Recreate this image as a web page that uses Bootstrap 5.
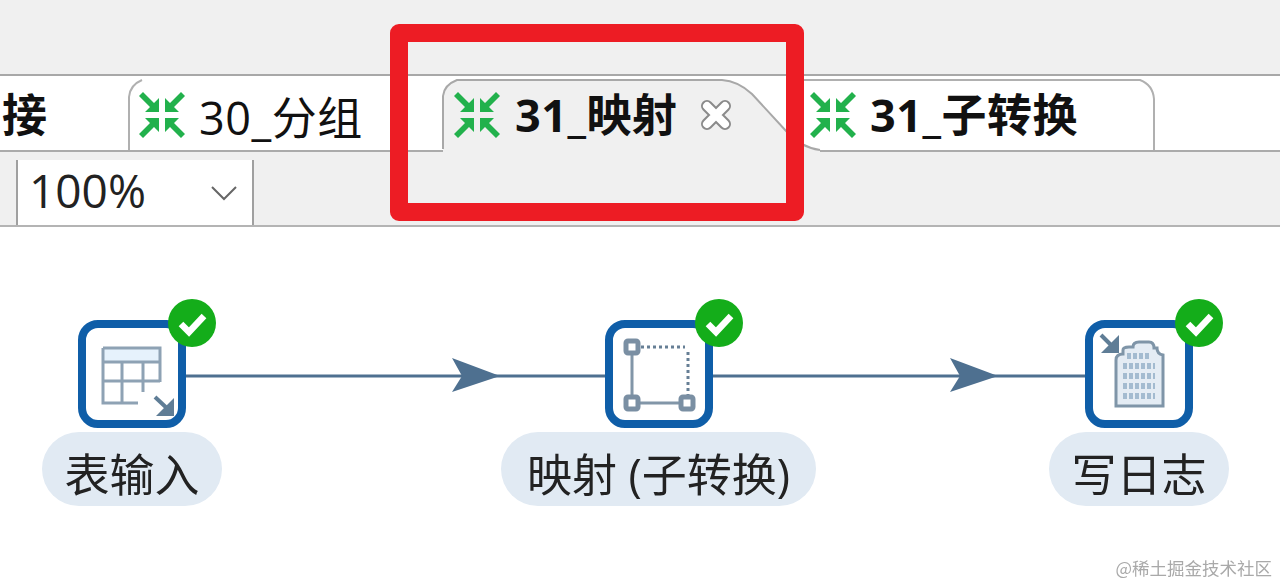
<!DOCTYPE html>
<html lang="en">

<head>
    <meta charset="utf-8" />
    <meta name="viewport" content="width=device-width, initial-scale=1" />
    <title>映射 (子转换)</title>

    <link rel="stylesheet" href="https://cdn.jsdelivr.net/npm/bootstrap@5.3.2/dist/css/bootstrap.min.css">
    <style>
        html, body {
            height: 584px;
            overflow: hidden;
        }

        body {
            background-color: #fff;
            font-family: "Open Sans", "Noto Sans CJK SC", sans-serif;
            color: #111;
            filter: blur(0.7px);
        }

        .top-gap {
            height: 76px;
            background-color: #f0f0f0;
            border-bottom: 2px solid #a8a8a8;
        }

        .tab-strip {
            height: 76px;
            padding-top: 4px;
            background-color: #fff;
            border-bottom: 2px solid #ababab;
        }

        .tab-item {
            height: 70px;
            font-size: 45px;
            letter-spacing: 0.5px;
            line-height: 70px;
            white-space: nowrap;
        }

        .tab-shape {
            top: -1px;
            left: 0;
        }

        .tab-inner {
            height: 70px;
        }

        #tab-first { width: 128px; font-weight: 700; }
        #tab-first .tab-inner { padding-left: 2px; }
        #tab-group { width: 314px; }
        #tab-group .tab-inner { padding-left: 10px; }
        #tab-group .tab-text { padding-top: 6px; }
        #tab-map { width: 358px; font-weight: 700; }
        #tab-map .tab-inner { padding-left: 11px; }
        #tab-sub { width: 355px; font-weight: 700; }
        #tab-sub .tab-inner { padding-left: 9px; }

        .tab-icon { margin-right: 13px; flex: none; }
        #tab-map .tab-icon { margin-right: 14px; }

        .tab-close { margin-left: 22px; flex: none; }

        .tool-row {
            height: 75px;
            padding-top: 8px;
            background-color: #f0f0f0;
            border-bottom: 2px solid #b4b4b4;
        }

        .zoom-box {
            width: 238px;
            margin-left: 16px;
            padding-left: 11px;
            padding-right: 14px;
            background-color: #fff;
            border-left: 2px solid #a0a0a0;
            border-right: 2px solid #a0a0a0;
            font-size: 46px;
            line-height: 60px;
            color: #222;
        }

        .zoom-value { margin-top: -5px; }

        .flow-canvas {
            height: 357px;
        }

        .flow-links {
            top: 0;
            left: 0;
        }

        .flow-node {
            top: 93px;
        }

        #node-input { left: 42px; width: 180px; }
        #node-map { left: 501px; width: 315px; }
        #node-log { left: 1049px; width: 180px; }

        .node-box {
            width: 108px;
            height: 108px;
            background-color: #fff;
            border: 8px solid #0f5ea8;
            border-radius: 20px;
        }

        .node-check {
            top: -29px;
            right: -38px;
        }

        .node-label {
            height: 74px;
            margin-top: 4px;
            background-color: #e1eaf3;
            border-radius: 37px;
            font-size: 45px;
            line-height: 86px;
            color: #222;
            white-space: nowrap;
        }

        .red-frame {
            top: 24px;
            left: 390px;
            width: 414px;
            height: 197px;
            border: 18px solid #ed1c24;
            border-radius: 9px;
        }

        .site-mark {
            right: 8px;
            bottom: 3px;
            font-family: "Noto Sans CJK SC", sans-serif;
            font-size: 17.5px;
            color: #a9a9a9;
        }
    </style>
</head>

<body>
    <svg width="0" height="0" class="position-absolute">
        <defs>
            <g id="arrows-in" fill="#22b14c">
                <path d="M21 21H7l5-5L1 5l4-4 11 11 5-5z" />
                <path d="M27 21h14l-5-5L47 5l-4-4-11 11-5-5z" />
                <path d="M21 27H7l5 5L1 43l4 4 11-11 5 5z" />
                <path d="M27 27h14l-5 5 11 11-4 4-11-11-5 5z" />
            </g>
            <g id="ok-badge">
                <circle cx="24" cy="24" r="24" fill="#14ad1a" />
                <path d="M13 25l8 8 15-16" fill="none" stroke="#fff" stroke-width="6.5" />
            </g>
        </defs>
    </svg>

    <div class="top-gap"></div>

    <ul class="nav flex-nowrap tab-strip">
        <li class="tab-item" id="tab-first">
            <div class="tab-inner d-flex align-items-center">接</div>
        </li>
        <li class="tab-item position-relative" id="tab-group">
            <svg class="tab-shape position-absolute" width="314" height="72">
                <path d="M1 71V18Q2 6 14 1" fill="none" stroke="#b0b0b0" stroke-width="2" />
            </svg>
            <div class="tab-inner d-flex align-items-center position-relative">
                <svg class="tab-icon" width="48" height="48"><use href="#arrows-in" /></svg><span class="tab-text">30_分组</span>
            </div>
        </li>
        <li class="tab-item position-relative" id="tab-map">
            <svg class="tab-shape position-absolute" width="385" height="74">
                <path d="M1 72V17Q2 6 15 1H280Q296 2 310 15L345 53Q358 68 378 71V74H1z" fill="#f0f0f0" />
                <path d="M1 70V17Q2 6 15 1H280Q296 2 310 15L345 53Q358 68 378 71" fill="none" stroke="#a8a8a8" stroke-width="2" />
            </svg>
            <div class="tab-inner d-flex align-items-center position-relative">
                <svg class="tab-icon" width="48" height="48"><use href="#arrows-in" /></svg><span class="tab-text">31_映射</span>
                <svg class="tab-close" width="34" height="32" viewBox="0 0 34 32">
                    <path d="M8 7L26 25M26 7L8 25" stroke="#8a8a8a" stroke-width="12" stroke-linecap="round" />
                    <path d="M8 7L26 25M26 7L8 25" stroke="#fff" stroke-width="8" stroke-linecap="round" />
                </svg>
            </div>
        </li>
        <li class="tab-item position-relative" id="tab-sub">
            <svg class="tab-shape position-absolute" width="355" height="72">
                <path d="M0 1H340Q353 6 354 20V71" fill="none" stroke="#b0b0b0" stroke-width="2" />
            </svg>
            <div class="tab-inner d-flex align-items-center position-relative">
                <svg class="tab-icon" width="48" height="48"><use href="#arrows-in" /></svg><span class="tab-text">31_子转换</span>
            </div>
        </li>
    </ul>

    <div class="tool-row d-flex">
        <div class="zoom-box d-flex align-items-center justify-content-between">
            <span class="zoom-value">100%</span>
            <svg width="28" height="16" viewBox="0 0 28 16">
                <path d="M2 2l12 12L26 2" fill="none" stroke="#666" stroke-width="2" />
            </svg>
        </div>
    </div>

    <div class="flow-canvas position-relative">
        <svg class="flow-links position-absolute" width="1280" height="357">
            <path d="M186 149H606M712 149H1086" stroke="#4e7090" stroke-width="3" />
            <path d="M452 131L500 149L452 165L462 149z" fill="#4e7090" />
            <path d="M950 131L998 149L950 165L960 149z" fill="#4e7090" />
        </svg>

        <div class="flow-node position-absolute d-flex flex-column align-items-center" id="node-input">
            <div class="node-box position-relative">
                <svg width="92" height="92">
                    <rect x="18" y="21" width="56" height="13" fill="#e6f2fc" />
                    <path d="M17 20H74V54M17 20V75H52M17 34H74M17 53H74M36 34V75M57 34V64" fill="none" stroke="#8ea2b4" stroke-width="3" />
                    <path d="M69 69L85 84" stroke="#5f7d96" stroke-width="4" />
                    <path d="M88 70V88H70z" fill="#5f7d96" />
                </svg>
                <svg class="node-check position-absolute" width="48" height="48"><use href="#ok-badge" /></svg>
            </div>
            <div class="node-label w-100 text-center">表输入</div>
        </div>

        <div class="flow-node position-absolute d-flex flex-column align-items-center" id="node-map">
            <div class="node-box position-relative">
                <svg width="92" height="92">
                    <path d="M19 26V68M26 75H68" stroke="#8296a8" stroke-width="3" />
                    <path d="M28 19H72M75 24V68" stroke="#667f95" stroke-width="3" stroke-dasharray="3 3" />
                    <g fill="#fff" stroke="#7a8fa3" stroke-width="5">
                        <rect x="13" y="13" width="12" height="12" rx="2" />
                        <rect x="13" y="69" width="12" height="12" rx="2" />
                        <rect x="68" y="69" width="12" height="12" rx="2" />
                    </g>
                </svg>
                <svg class="node-check position-absolute" width="48" height="48"><use href="#ok-badge" /></svg>
            </div>
            <div class="node-label w-100 text-center">映射 (子转换)</div>
        </div>

        <div class="flow-node position-absolute d-flex flex-column align-items-center" id="node-log">
            <div class="node-box position-relative">
                <svg width="92" height="92">
                    <path d="M23 32Q23 26 30 26V22Q30 19 36 19H40Q40 14 46 14H56Q61 14 61 20H64Q64 26 70 27V78H23z" fill="#e4ecf4" stroke="#7f95a8" stroke-width="3" />
                    <path d="M34 28H58M30 38H62M30 48H62M30 58H62M30 68H62" stroke="#a3bbd0" stroke-width="6" stroke-dasharray="4 2" />
                    <path d="M8 7L23 22" stroke="#5f7d96" stroke-width="4" />
                    <path d="M26 7V25H8z" fill="#5f7d96" />
                </svg>
                <svg class="node-check position-absolute" width="48" height="48"><use href="#ok-badge" /></svg>
            </div>
            <div class="node-label w-100 text-center">写日志</div>
        </div>
    </div>

    <div class="red-frame position-absolute"></div>
    <div class="site-mark position-absolute">@稀土掘金技术社区</div>
</body>

</html>
